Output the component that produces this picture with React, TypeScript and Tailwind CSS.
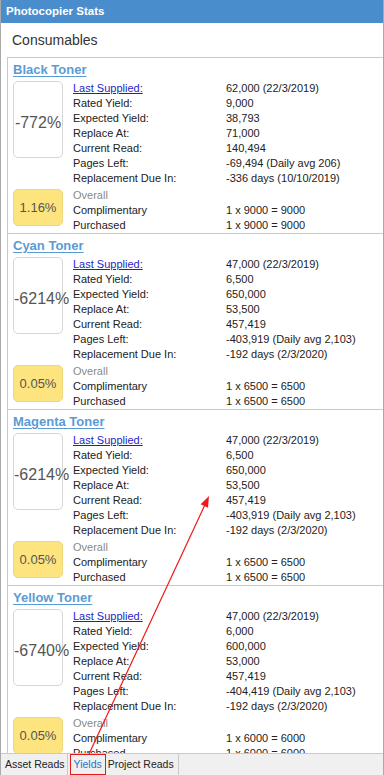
import React from "react";

interface Toner {
  name: string;
  yieldPct: string;
  overall: string;
  rows: string[];
  comp: string;
  purch: string;
}

const labels = [
  "Rated Yield:",
  "Expected Yield:",
  "Replace At:",
  "Current Read:",
  "Pages Left:",
  "Replacement Due In:",
];

const toners: Toner[] = [
  {
    name: "Black Toner",
    yieldPct: "-772%",
    overall: "1.16%",
    rows: ["62,000 (22/3/2019)", "9,000", "38,793", "71,000", "140,494", "-69,494 (Daily avg 206)", "-336 days (10/10/2019)"],
    comp: "1 x 9000 = 9000",
    purch: "1 x 9000 = 9000",
  },
  {
    name: "Cyan Toner",
    yieldPct: "-6214%",
    overall: "0.05%",
    rows: ["47,000 (22/3/2019)", "6,500", "650,000", "53,500", "457,419", "-403,919 (Daily avg 2,103)", "-192 days (2/3/2020)"],
    comp: "1 x 6500 = 6500",
    purch: "1 x 6500 = 6500",
  },
  {
    name: "Magenta Toner",
    yieldPct: "-6214%",
    overall: "0.05%",
    rows: ["47,000 (22/3/2019)", "6,500", "650,000", "53,500", "457,419", "-403,919 (Daily avg 2,103)", "-192 days (2/3/2020)"],
    comp: "1 x 6500 = 6500",
    purch: "1 x 6500 = 6500",
  },
  {
    name: "Yellow Toner",
    yieldPct: "-6740%",
    overall: "0.05%",
    rows: ["47,000 (22/3/2019)", "6,000", "600,000", "53,000", "457,419", "-404,419 (Daily avg 2,103)", "-192 days (2/3/2020)"],
    comp: "1 x 6000 = 6000",
    purch: "1 x 6000 = 6000",
  },
];

function TonerSection({ toner }: { toner: Toner }) {
  return (
    <div className="shrink-0 border-b border-[#c9c9c9] pl-[5px]">
      <div className="h-[22px] pt-[2px] leading-[20px] text-[13px] font-bold text-[#5b9bd5] underline underline-offset-2">
        {toner.name}
      </div>
      <div className="mt-[1px] flex">
        <div className="h-[77px] w-[50px] shrink-0 rounded-[5px] border border-[#d6d6d6] pt-[31px] text-center text-[16px] leading-[20px] whitespace-nowrap text-[#555]">
          {toner.yieldPct}
        </div>
        <div className="ml-[10px] grid grid-cols-[153px_1fr] text-[11px] leading-[15px] text-[#222]">
          <div className="text-[#1f1fc4] underline">Last Supplied:</div>
          <div>{toner.rows[0]}</div>
          {labels.map((l, i) => (
            <React.Fragment key={l}>
              <div>{l}</div>
              <div>{toner.rows[i + 1]}</div>
            </React.Fragment>
          ))}
        </div>
      </div>
      <div className="mt-[2px] flex">
        <div className="mt-[1px] flex h-[37px] w-[50px] shrink-0 items-center justify-center rounded-[5px] border border-[#eed77a] bg-[#fde47e] text-[13px] text-[#555]">
          {toner.overall}
        </div>
        <div className="ml-[10px] grid grid-cols-[153px_1fr] text-[11px] leading-[15px] text-[#222]">
          <div className="text-[#8a8a8a]">Overall</div>
          <div></div>
          <div>Complimentary</div>
          <div>{toner.comp}</div>
          <div>Purchased</div>
          <div>{toner.purch}</div>
        </div>
      </div>
    </div>
  );
}

export default function App() {
  return (
    <div className="relative flex h-[775px] w-[384px] flex-col overflow-hidden border-x border-[#a9a9a9] bg-white font-['Liberation_Sans',Arial,sans-serif]">
      <div className="h-[23px] shrink-0 bg-[#4a8dcc] pl-[5px] text-[11.5px] font-bold leading-[23px] text-white">
        Photocopier Stats
      </div>
      <div className="h-[34px] shrink-0 pl-[11px] text-[14px] leading-[34px] text-[#333]">Consumables</div>
      <div className="ml-[6px] flex min-h-0 flex-1 flex-col overflow-hidden border-l border-t border-[#c9c9c9]">
        {toners.map((t) => (
          <TonerSection key={t.name} toner={t} />
        ))}
      </div>
      <div className="flex h-[22px] shrink-0 items-stretch border-t border-[#c9c9c9] bg-[#f0f0f0] text-[10.5px] text-[#222]">
        <div className="flex items-center border-r border-[#c9c9c9] pl-[4px] pr-[2px]">Asset Reads</div>
        <div className="ml-[2px] flex items-center border border-[#e01b1b] px-[3px] text-[#1e74c9]">Yields</div>
        <div className="flex items-center border-r border-[#c9c9c9] pl-[2px] pr-[4px]">Project Reads</div>
      </div>
      <svg className="pointer-events-none absolute left-0 top-0" width="384" height="775" viewBox="0 0 384 775">
        <line x1="88" y1="754" x2="203.4" y2="506" stroke="#f01818" strokeWidth="1.2" />
        <polygon points="208,496 207,507.7 199.7,504.3" fill="#f01818" />
      </svg>
    </div>
  );
}
